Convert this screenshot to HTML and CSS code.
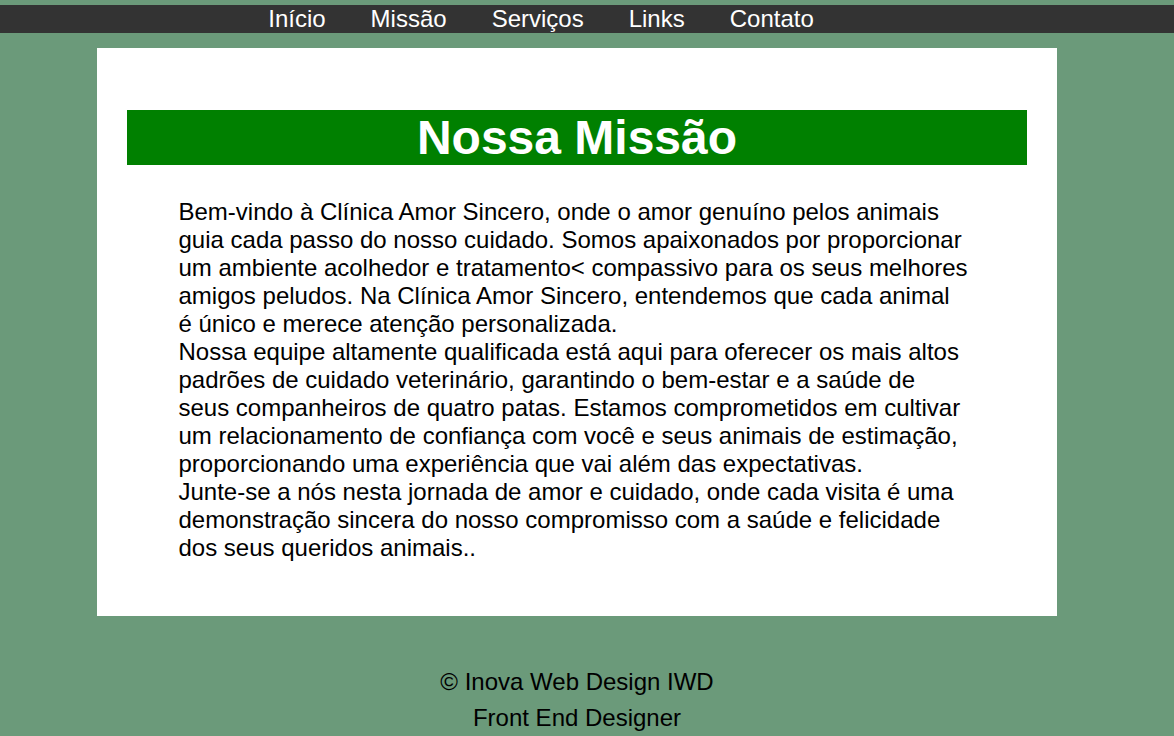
FILE: index.html
```html
<!DOCTYPE html>
<html lang="pt-BR">
<head>
<meta charset="utf-8">
<title>Nossa Missão</title>
<link rel="stylesheet" href="styles.css">
</head>
<body>
<nav class="topnav">
  <ul class="menu">
    <li><a href="#">Início</a></li>
    <li><a href="#">Missão</a></li>
    <li><a href="#">Serviços</a></li>
    <li><a href="#">Links</a></li>
    <li><a href="#">Contato</a></li>
  </ul>
</nav>
<div class="page">
  <main class="card">
    <h1 class="title">Nossa Missão</h1>
    <div class="text">
      <p>Bem-vindo à Clínica Amor Sincero, onde o amor genuíno pelos animais guia cada passo do nosso cuidado. Somos apaixonados por proporcionar um ambiente acolhedor e tratamento&lt; compassivo para os seus melhores amigos peludos. Na Clínica Amor Sincero, entendemos que cada animal é único e merece atenção personalizada.</p>
      <p>Nossa equipe altamente qualificada está aqui para oferecer os mais altos padrões de cuidado veterinário, garantindo o bem-estar e a saúde de seus companheiros de quatro patas. Estamos comprometidos em cultivar um relacionamento de confiança com você e seus animais de estimação, proporcionando uma experiência que vai além das expectativas.</p>
      <p>Junte-se a nós nesta jornada de amor e cuidado, onde cada visita é uma demonstração sincera do nosso compromisso com a saúde e felicidade dos seus queridos animais..</p>
    </div>
  </main>
  <footer class="footer">
    <p>© Inova Web Design IWD</p>
    <p>Front End Designer</p>
  </footer>
</div>
</body>
</html>
```
FILE: styles.css
```css
html, body {
  margin: 0;
  padding: 0;
}
body {
  background: #6b9a7a;
  font-family: "Liberation Sans", Arial, sans-serif;
  color: #000;
  padding-top: 5px;
}
.topnav {
  background: #333333;
  height: 28px;
}
.menu {
  list-style: none;
  margin: 0;
  padding: 0 92px 0 0;
  display: flex;
  justify-content: center;
  gap: 45px;
}
.menu a {
  color: #fff;
  text-decoration: none;
  font-size: 24px;
  line-height: 28px;
  display: block;
}
.page {
  width: 1154px;
}
.card {
  display: block;
  width: 900px;
  margin: 15px auto 0;
  padding: 30px;
  background: #fff;
}
.title {
  margin: 32px 0;
  background: #008000;
  color: #fff;
  text-align: center;
  font-size: 48px;
  font-weight: bold;
}
.text {
  width: 790px;
  margin: 0 0 0 51.5px;
  padding: 1px 0 24px;
  font-size: 24px;
  line-height: 28px;
}
.text p {
  margin: 0;
}
.footer {
  margin-top: 48px;
  text-align: center;
  font-size: 24px;
  line-height: 36px;
}
.footer p {
  margin: 0;
}
```
